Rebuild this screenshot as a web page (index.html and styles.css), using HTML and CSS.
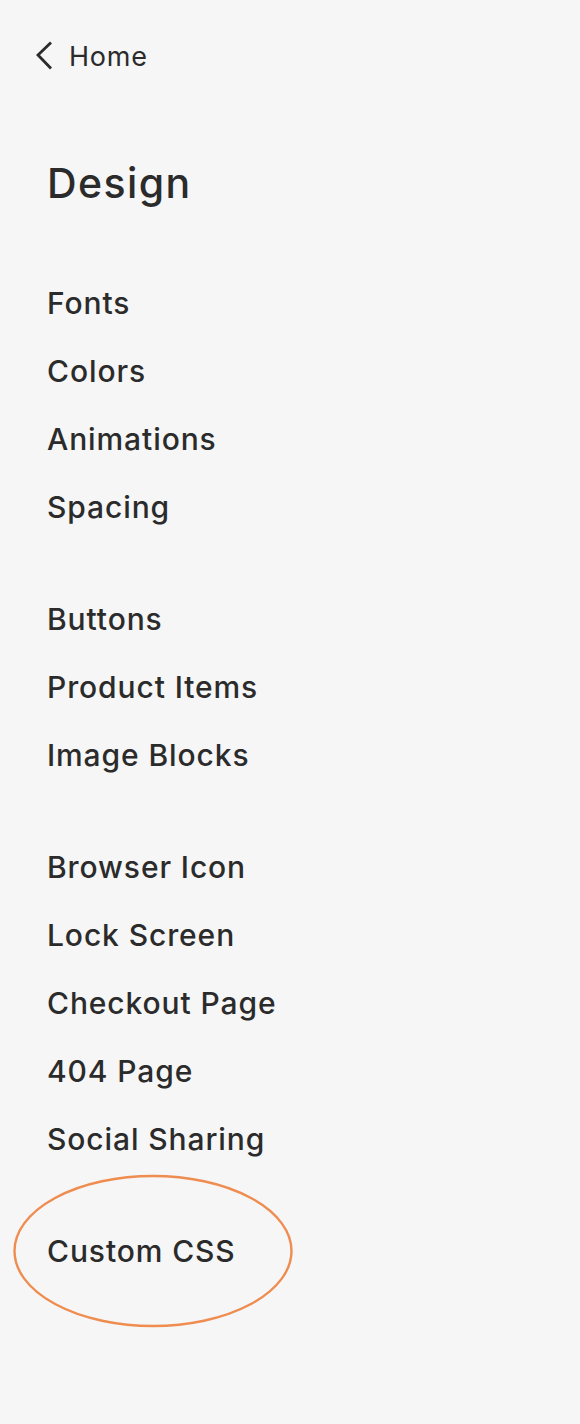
FILE: index.html
```html
<!DOCTYPE html>
<html lang="en">
<head>
<meta charset="utf-8">
<title>Design</title>
<link rel="stylesheet" href="styles.css">
</head>
<body>
<div class="panel">
  <a class="back" href="#">
    <svg class="chev" width="20" height="30" viewBox="0 0 20 30" aria-hidden="true">
      <path d="M16 1.5 L3 14 L16 27.5" fill="none" stroke="#2b2b2b" stroke-width="2.8" stroke-linejoin="miter"/>
    </svg>
    <span>Home</span>
  </a>
  <h1 class="title">Design</h1>
  <ul class="group">
    <li class="item">Fonts</li>
    <li class="item">Colors</li>
    <li class="item">Animations</li>
    <li class="item">Spacing</li>
  </ul>
  <ul class="group">
    <li class="item">Buttons</li>
    <li class="item">Product Items</li>
    <li class="item">Image Blocks</li>
  </ul>
  <ul class="group">
    <li class="item">Browser Icon</li>
    <li class="item">Lock Screen</li>
    <li class="item">Checkout Page</li>
    <li class="item">404 Page</li>
    <li class="item">Social Sharing</li>
  </ul>
  <ul class="group">
    <li class="item highlighted">Custom CSS
      <svg class="ring" width="284" height="156" viewBox="0 0 284 156" aria-hidden="true">
        <ellipse cx="142" cy="78" rx="138.5" ry="75" fill="none" stroke="#ef8c50" stroke-width="2.4"/>
      </svg>
    </li>
  </ul>
</div>
</body>
</html>
```
FILE: styles.css
```css
html, body {
  margin: 0;
  padding: 0;
  background: #f6f6f6;
}
body {
  font-family: Inter, "Noto Sans", "Liberation Sans", sans-serif;
  color: #2b2b2b;
  min-height: 1424px;
}
.panel {
  padding: 30px 0 0 47px;
}
.back {
  display: flex;
  align-items: center;
  gap: 14px;
  margin-left: -12px;
  height: 52px;
  color: #2b2b2b;
  text-decoration: none;
  font-size: 27px;
  font-weight: 400;
  letter-spacing: 0.8px;
}
.chev {
  display: block;
}
.title {
  margin: 75px 0 0 0;
  font-size: 41px;
  font-weight: 500;
  line-height: 52px;
  letter-spacing: 1.4px;
}
.group {
  list-style: none;
  margin: 0;
  padding: 0;
}
.title + .group {
  margin-top: 60px;
}
.group + .group {
  margin-top: 44px;
}
.item {
  height: 68px;
  line-height: 68px;
  font-size: 30px;
  font-weight: 500;
  letter-spacing: 0.9px;
}
.highlighted {
  position: relative;
}
.ring {
  position: absolute;
  left: -36px;
  top: -44px;
}
```
